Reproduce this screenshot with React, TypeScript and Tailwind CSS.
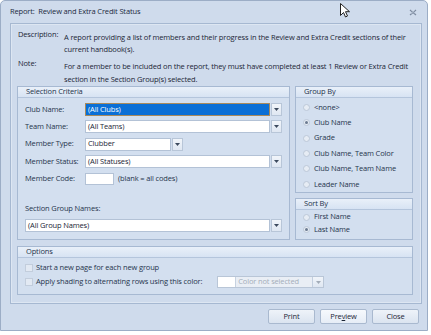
import React from 'react';

const font = { fontFamily: '"Open Sans", "Noto Sans", sans-serif', letterSpacing: '-0.15px' };

const Caret = () => (
  <svg width="5" height="3" viewBox="0 0 5 3" className="block">
    <path d="M0 0h5L2.5 3z" fill="#3c4a5e" />
  </svg>
);

const DropBtn = ({ disabled }: { disabled?: boolean }) => (
  <div className="w-[11px] h-full flex items-center justify-center border-l border-[#c3cfdf] bg-gradient-to-b from-[#f1f5fa] to-[#dfe7f2]">
    <div className={disabled ? 'opacity-40' : ''}>
      <Caret />
    </div>
  </div>
);

const Combo = ({ value, width, selected }: { value: string; width: string; selected?: boolean }) => (
  <div className={`${width} h-[13px] flex`}>
    <div
      className={`flex-1 flex items-center px-[2px] border ${
        selected ? 'bg-[#0a6fd6] border-[#a88a5c] text-white' : 'bg-white border-[#b3c2d6] text-[#1c2636]'
      }`}
    >
      {value}
    </div>
    <div className="w-[11px] ml-[1px] flex items-center justify-center border border-[#b8c6d8] bg-gradient-to-b from-[#f1f5fa] to-[#dfe7f2]">
      <Caret />
    </div>
  </div>
);

const GroupBox = ({ title, className, children }: { title: string; className?: string; children: React.ReactNode }) => (
  <div className={`border border-[#a7b9d2] bg-[#d3dfef] flex flex-col ${className ?? ''}`}>
    <div className="h-[11px] flex items-center px-[8px] bg-gradient-to-b from-[#e9f0f9] to-[#d7e3f3] border-b border-[#b4c5dc] text-[#24334b]">
      {title}
    </div>
    {children}
  </div>
);

const Radio = ({ label, checked }: { label: string; checked?: boolean }) => (
  <div className="flex items-center gap-[4px] pl-[7px]">
    <div className="w-[7px] h-[7px] rounded-full border border-[#bcc8d8] bg-[#e6ecf4] flex items-center justify-center">
      {checked && <div className="w-[3px] h-[3px] rounded-full bg-[#6b7a90]" />}
    </div>
    <span className="text-[#26354d]">{label}</span>
  </div>
);

const Check = ({ label }: { label: string }) => (
  <div className="flex items-center gap-[3px]">
    <div className="w-[8px] h-[8px] border border-[#c2cddc] bg-[#e2e9f3]" />
    <span className="text-[#26354d]">{label}</span>
  </div>
);

const Row = ({ label, children }: { label: string; children: React.ReactNode }) => (
  <div className="h-[17.3px] flex items-center">
    <span className="w-[60px] text-[#26354d] whitespace-nowrap">{label}</span>
    {children}
  </div>
);

const Btn = ({ children, focus }: { children: React.ReactNode; focus?: boolean }) => (
  <div
    className={`w-[47px] h-[15px] flex items-center justify-center border border-[#a9b9cf] rounded-[2px] text-[#1c2636] ${
      focus ? 'bg-gradient-to-b from-[#f6f9fd] to-[#e6edf6]' : 'bg-gradient-to-b from-[#eef3f9] to-[#dbe4f0]'
    }`}
  >
    {children}
  </div>
);

export default function App() {
  return (
    <div className="w-[431px] h-[335px] bg-white relative overflow-hidden text-[7.5px] leading-none" style={font}>
      <div className="w-[428px] h-[331px] border border-[#9cadc6] rounded-t-[5px] bg-[#cfdbec] flex flex-col">
        {/* title bar */}
        <div className="h-[22px] flex items-center justify-between pl-[9px] pr-[10px]">
          <span className="text-[#1c2a40]">Report:&nbsp; Review and Extra Credit Status</span>
          <svg width="8" height="7" viewBox="0 0 8 7">
            <path d="M1 1l6 5M7 1L1 6" stroke="#7c8aa0" strokeWidth="1.2" />
            <path d="M2 1l5 4M6 1L2 5" stroke="#b7c2d2" strokeWidth="0.6" />
          </svg>
        </div>

        {/* inner panel */}
        <div className="ml-[9px] w-[412px] h-[281px] border border-[#a6b8d1] shadow-[inset_0_0_0_1px_#dde6f2] px-[6px] flex flex-col">
          <div className="flex pt-[7px] text-[#1c2636]">
            <span className="w-[47px] pl-[1px]">Description:</span>
            <span className="flex-1 leading-[12px]">
              A report providing a list of members and their progress in the Review and Extra Credit sections of their current handbook(s).
            </span>
          </div>
          <div className="flex mt-[5px] text-[#1c2636]">
            <span className="w-[47px] pl-[1px]">Note:</span>
            <span className="flex-1 leading-[12.5px]">
              For a member to be included on the report, they must have completed at least 1 Review or Extra Credit section in the Section Group(s) selected.
            </span>
          </div>

          <div className="flex gap-[5px] mt-[1px]">
            <GroupBox title="Selection Criteria" className="w-[273px] h-[154px]">
              <div className="px-[7px] pt-[3px] flex flex-col">
                <Row label="Club Name:">
                  <Combo value="(All Clubs)" width="w-[197px]" selected />
                </Row>
                <Row label="Team Name:">
                  <Combo value="(All Teams)" width="w-[197px]" />
                </Row>
                <Row label="Member Type:">
                  <Combo value="Clubber" width="w-[98px]" />
                </Row>
                <Row label="Member Status:">
                  <Combo value="(All Statuses)" width="w-[197px]" />
                </Row>
                <Row label="Member Code:">
                  <div className="w-[29px] h-[12px] border border-[#b3c2d6] bg-white" />
                  <span className="ml-[4px] text-[#26354d]">(blank = all codes)</span>
                </Row>
                <div className="mt-[18px] text-[#26354d]">Section Group Names:</div>
                <div className="mt-[6px]">
                  <Combo value="(All Group Names)" width="w-[257px]" />
                </div>
              </div>
            </GroupBox>

            <div className="w-[118px] flex flex-col gap-[5px]">
              <GroupBox title="Group By" className="h-[107px]">
                <div className="flex flex-col pt-[2px]">
                  {['<none>', 'Club Name', 'Grade', 'Club Name, Team Color', 'Club Name, Team Name', 'Leader Name'].map((g) => (
                    <div key={g} className="h-[15.4px] flex items-center">
                      <Radio label={g} checked={g === 'Club Name'} />
                    </div>
                  ))}
                </div>
              </GroupBox>
              <GroupBox title="Sort By" className="h-[42px]">
                <div className="flex flex-col">
                  <div className="h-[13px] flex items-center pt-[1px]">
                    <Radio label="First Name" />
                  </div>
                  <div className="h-[13px] flex items-center">
                    <Radio label="Last Name" checked />
                  </div>
                </div>
              </GroupBox>
            </div>
          </div>

          <GroupBox title="Options" className="mt-[6px] w-[396px] h-[49px]">
            <div className="flex flex-col pl-[7px] pt-[3px]">
              <div className="h-[14px] flex items-center">
                <Check label="Start a new page for each new group" />
              </div>
              <div className="h-[14px] flex items-center">
                <Check label="Apply shading to alternating rows using this color:" />
                <div className="ml-[15px] w-[107px] h-[12px] flex border border-[#b9c6d7] bg-[#e9eef5]">
                  <div className="w-[18px] h-full bg-white border-r border-[#c7d2e0]" />
                  <div className="flex-1 flex items-center pl-[2px] text-[#a4adb9]">Color not selected</div>
                  <DropBtn disabled />
                </div>
              </div>
            </div>
          </GroupBox>
        </div>

        {/* buttons */}
        <div className="flex justify-end gap-[5px] pr-[8px] mt-[5px]">
          <Btn>Print</Btn>
          <Btn focus>
            <span>
              Pre<span className="underline">v</span>iew
            </span>
          </Btn>
          <Btn>Close</Btn>
        </div>
      </div>

      {/* mouse cursor */}
      <svg className="absolute left-[340px] top-[3px]" width="10" height="15" viewBox="0 0 10 15">
        <path d="M0.5 0.5v12l3-3 2 4.5 2-1-2-4.3h4z" fill="white" stroke="#222" strokeWidth="1" strokeLinejoin="round" />
      </svg>
    </div>
  );
}
